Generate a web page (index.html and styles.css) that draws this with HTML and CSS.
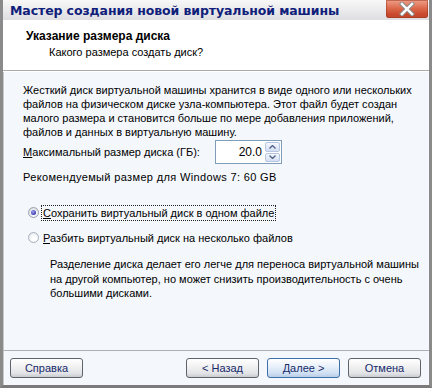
FILE: index.html
```html
<!DOCTYPE html>
<html lang="ru">
<head>
<meta charset="utf-8">
<title>Мастер создания новой виртуальной машины</title>
<link rel="stylesheet" href="styles.css">
</head>
<body>
<div class="window">
  <div class="titlebar">
    <span class="title">Мастер создания новой виртуальной машины</span>
    <span class="close">
      <svg width="20" height="14" viewBox="0 0 20 14">
        <path d="M5 2 L15 12 M15 2 L5 12" stroke="#8a8a8a" stroke-width="4.4" stroke-linecap="square"/>
        <path d="M5 2 L15 12 M15 2 L5 12" stroke="#ffffff" stroke-width="2.4" stroke-linecap="square"/>
      </svg>
    </span>
  </div>
  <div class="header">
    <div class="h-title">Указание размера диска</div>
    <div class="h-sub">Какого размера создать диск?</div>
  </div>
  <div class="content">
    <p class="para">Жесткий диск виртуальной машины хранится в виде одного или нескольких<br>файлов на физическом диске узла-компьютера. Этот файл будет создан<br>малого размера и становится больше по мере добавления приложений,<br>файлов и данных в виртуальную машину.</p>
    <div class="size-row">
      <span class="label"><u>М</u>аксимальный размер диска (ГБ):</span>
      <div class="spin">
        <span class="spin-value">20.0</span>
        <div class="spin-btns">
          <span class="spin-btn"><svg width="7" height="4" viewBox="0 0 7 4"><path d="M0.5 3.5 L3.5 0.5 L6.5 3.5" fill="none" stroke="#4d6185" stroke-width="1.3"/></svg></span>
          <span class="spin-btn"><svg width="7" height="4" viewBox="0 0 7 4"><path d="M0.5 0.5 L3.5 3.5 L6.5 0.5" fill="none" stroke="#4d6185" stroke-width="1.3"/></svg></span>
        </div>
      </div>
    </div>
    <div class="recommend">Рекомендуемый размер для Windows 7: 60 GB</div>
    <div class="radios">
      <div class="radio-row">
        <span class="radio checked"><span class="dot"></span></span>
        <span class="radio-label focus"><u>С</u>охранить виртуальный диск в одном файле</span>
      </div>
      <div class="radio-row">
        <span class="radio"></span>
        <span class="radio-label"><u>Р</u>азбить виртуальный диск на несколько файлов</span>
      </div>
      <p class="desc">Разделение диска делает его легче для переноса виртуальной машины<br>на другой компьютер, но может снизить производительность с очень<br>большими дисками.</p>
    </div>
  </div>
  <div class="footer">
    <button class="btn">Справка</button>
    <div class="spacer"></div>
    <button class="btn">&lt; Назад</button>
    <button class="btn default">Далее &gt;</button>
    <button class="btn">Отмена</button>
  </div>
</div>
</body>
</html>
```
FILE: styles.css
```css
* { box-sizing: border-box; }
html, body { margin: 0; padding: 0; background: #ffffff; }
body { font-family: "Liberation Sans", Arial, sans-serif; font-size: 11px; color: #000; }

.window {
  width: 432px;
  height: 388px;
  display: flex;
  flex-direction: column;
  border-left: 3px solid #8a8a8a;
  border-right: 3px solid #8a8a8a;
  border-bottom: 3px solid #7a7a7a;
  background: #f4f7fc;
  box-shadow: inset 1px 0 0 #c8c8c8;
}

.titlebar {
  height: 20px;
  flex: none;
  display: flex;
  align-items: center;
  justify-content: space-between;
  padding-left: 7px;
  background: linear-gradient(#f8f8f8, #e8e8ea 60%, #dedee1);
}
.title {
  font-family: "DejaVu Sans", sans-serif;
  font-weight: bold;
  font-size: 12.5px;
  color: #10207a;
  letter-spacing: -0.1px;
}
.close {
  width: 42px;
  height: 18px;
  margin-right: 1px;
  align-self: flex-start;
  display: flex;
  align-items: center;
  justify-content: center;
  border-radius: 0 0 3px 3px;
  background: linear-gradient(#eea08a, #dd6a4c 45%, #c9482c 80%, #c04a30);
  box-shadow: inset 0 0 0 1px rgba(150, 50, 30, 0.5);
}

.header {
  height: 51px;
  flex: none;
  background: #ffffff;
  border-bottom: 1px solid #a9aaae;
  padding: 9px 0 0 23px;
}
.h-title {
  font-weight: bold;
  font-size: 12px;
  line-height: 14px;
}
.h-sub {
  margin-top: 2px;
  padding-left: 23px;
  line-height: 14px;
}

.content {
  flex: 1;
  padding: 12px 4px 0 20px;
  box-shadow: inset 0 1px 0 #ffffff;
  white-space: nowrap;
}
.para {
  margin: 0;
  line-height: 14px;
}
.size-row {
  margin-top: 1px;
  display: flex;
  align-items: center;
}
.label { width: 192px; }
.spin {
  width: 67px;
  height: 24px;
  border: 1px solid #7f9db9;
  background: #ffffff;
  display: flex;
  align-items: center;
  justify-content: flex-end;
  padding: 1px;
}
.spin-value {
  font-size: 12px;
  margin-right: 3px;
}
.spin-btns {
  display: flex;
  flex-direction: column;
  gap: 1px;
  height: 100%;
}
.spin-btn {
  width: 15px;
  flex: 1;
  display: flex;
  align-items: center;
  justify-content: center;
  border: 1px solid #b6c6e0;
  border-radius: 2px;
  background: linear-gradient(#f4f7ff, #d4def2);
}
.recommend {
  margin-top: 6px;
  line-height: 14px;
  letter-spacing: 0.35px;
}
.radios {
  margin-top: 20px;
  padding-left: 5px;
}
.radio-row {
  display: flex;
  align-items: center;
  height: 17px;
  margin-bottom: 8px;
}
.radio {
  width: 11px;
  height: 11px;
  border-radius: 50%;
  border: 1px solid #a8b0bc;
  background: radial-gradient(circle at 60% 65%, #ffffff 30%, #dfe3ea 90%);
  display: flex;
  align-items: center;
  justify-content: center;
  margin-right: 2px;
}
.radio.checked {
  border-color: #9aa2b0;
  background: radial-gradient(circle at 55% 60%, #f4f5f8 40%, #c9cdd6 95%);
}
.dot {
  width: 5px;
  height: 5px;
  border-radius: 50%;
  background: radial-gradient(circle at 40% 35%, #9ea4f2, #3c3cb0 70%);
}
.radio-label {
  padding: 1px 1px;
  border: 1px dotted transparent;
}
.radio-label.focus { border-color: #202020; }
.desc {
  margin: 11px 0 0 22px;
  line-height: 14.5px;
}

.footer {
  height: 35px;
  flex: none;
  border-top: 1px solid #aeb0b5;
  display: flex;
  align-items: center;
  padding: 0 8px 0 7px;
  gap: 8px;
}
.spacer { flex: 1; }
.btn {
  width: 73px;
  height: 20px;
  font-family: "Liberation Sans", Arial, sans-serif;
  font-size: 11px;
  color: #162a6a;
  border: 1px solid #5f646c;
  border-radius: 3px;
  background: linear-gradient(#ffffff, #f2f2f2 40%, #e2e3e6 80%, #c9cbd0);
  padding: 0;
}
.btn.default {
  border-color: #3d6fa8;
  background: linear-gradient(#ffffff, #eaf1fb 40%, #cfdff3 80%, #b8cde8);
}
```
